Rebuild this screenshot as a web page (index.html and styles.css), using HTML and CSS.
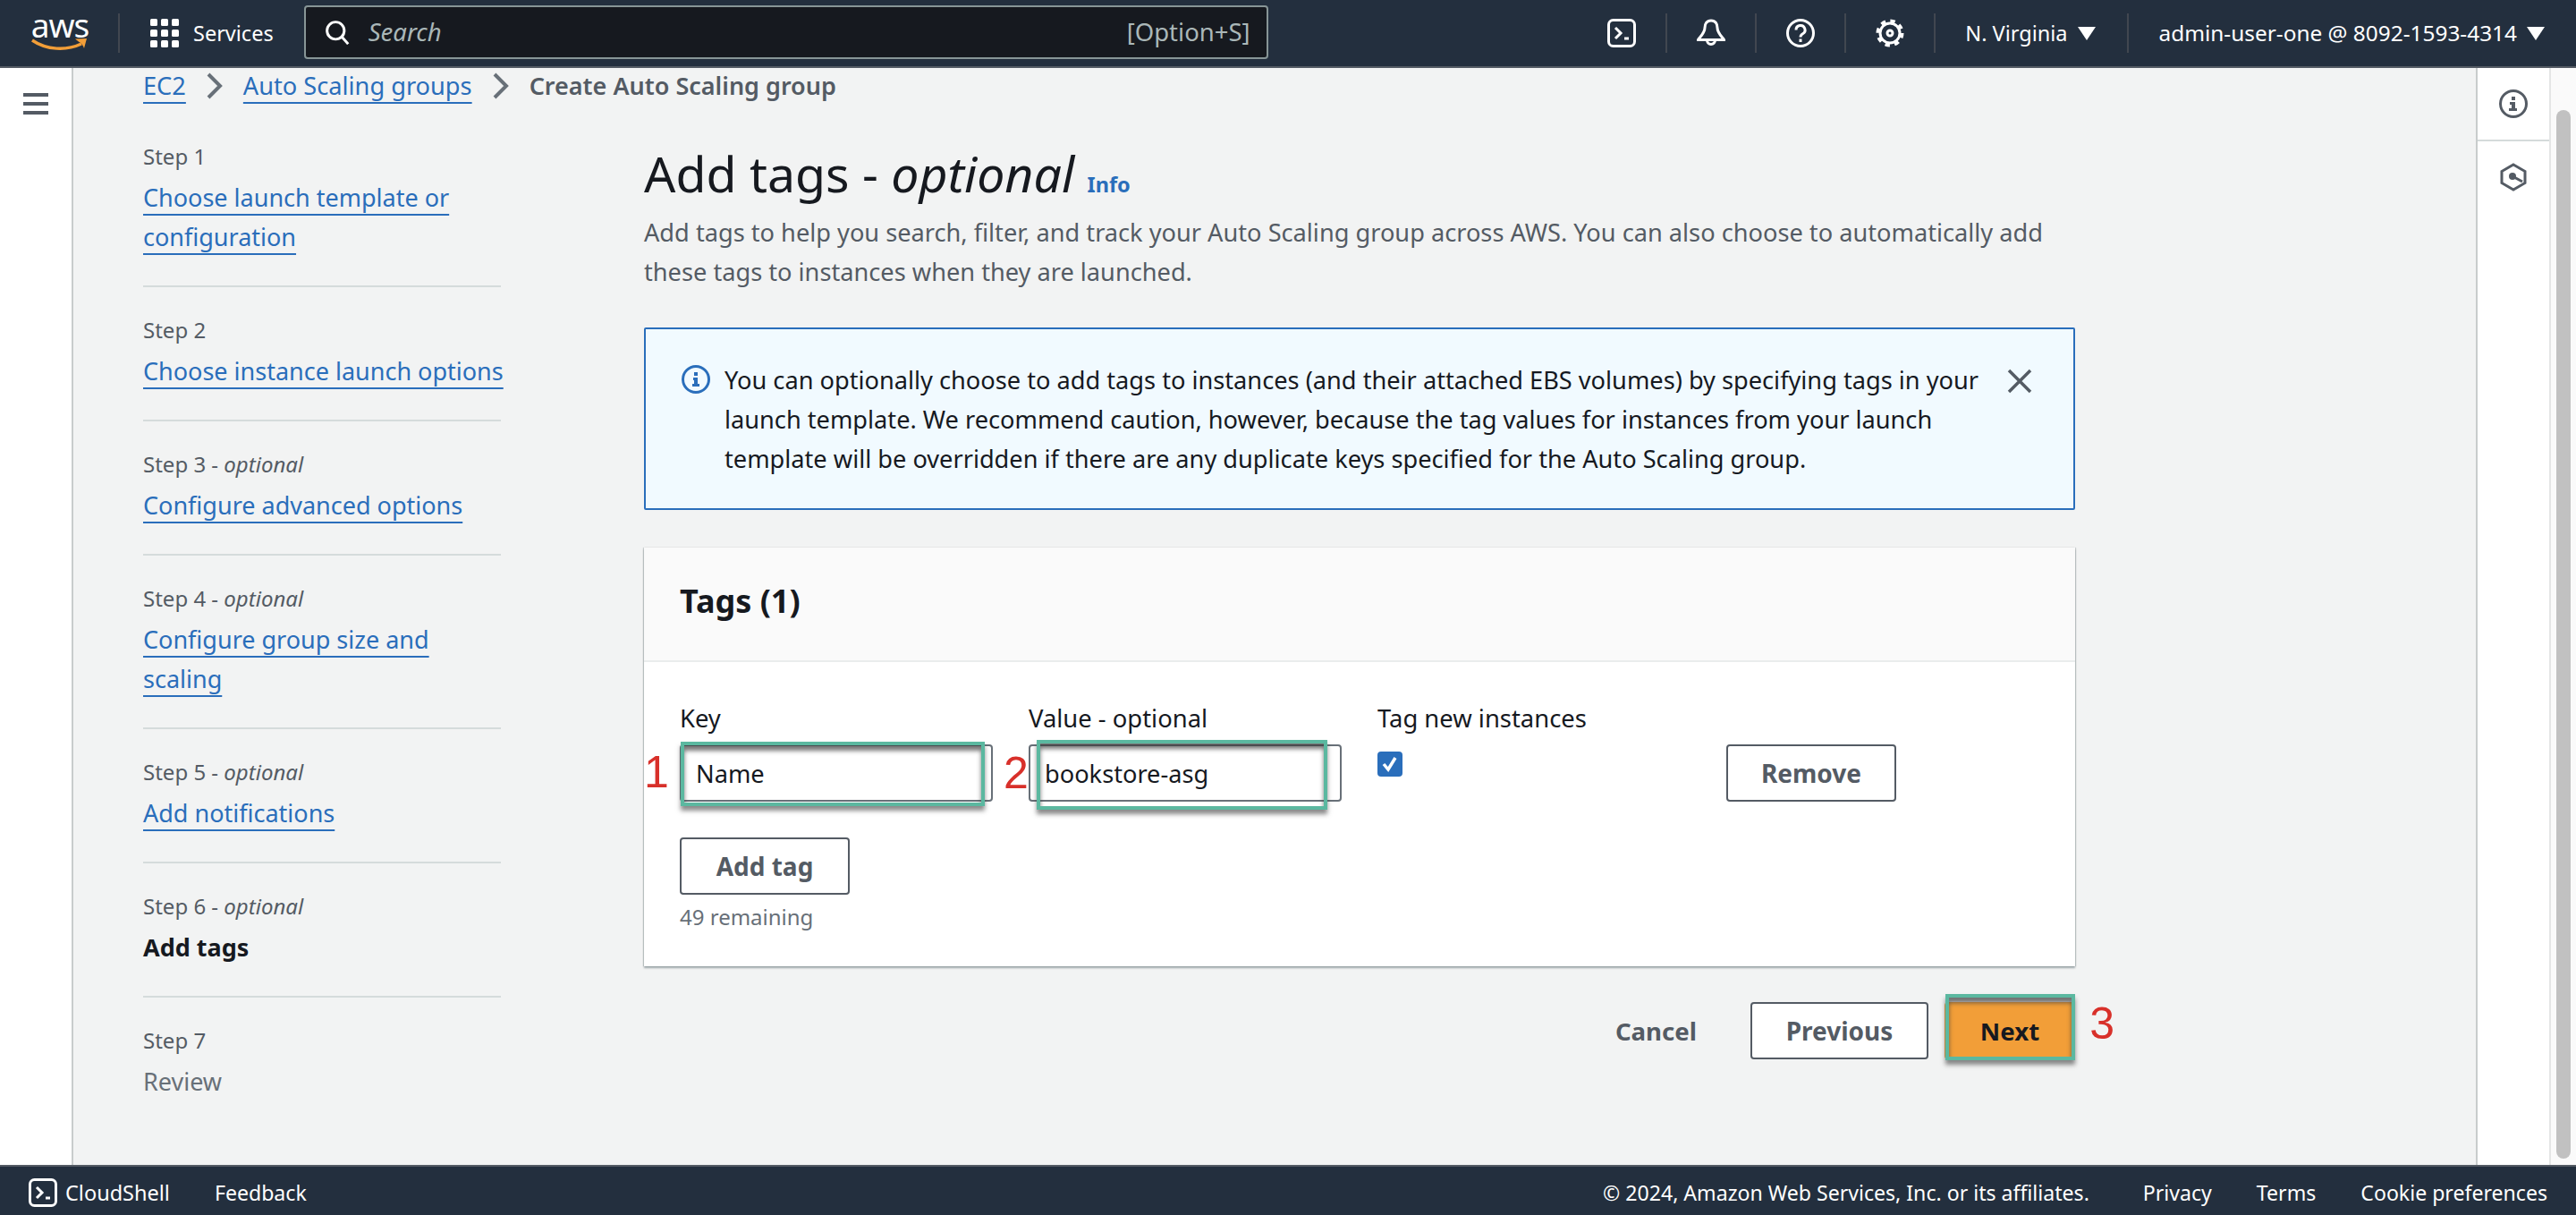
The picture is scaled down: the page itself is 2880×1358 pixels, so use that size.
FILE: index.html
```html
<!DOCTYPE html>
<html lang="en">
<head>
    <meta charset="UTF-8">
    <title>Create Auto Scaling group</title>
    <link rel="stylesheet" href="styles.css">
</head>
<body>
    <header class="topbar">
        <div class="logo">
            <span class="logo-word">aws</span>
            <svg class="logo-smile" width="64" height="16" viewBox="0 0 64 16"><path d="M1 3c16 11 38 12 55 4" fill="none" stroke="#f29e38" stroke-width="3.4"/><path d="M49 1.5l13-.5-3 11c-1-3-3-6-5.5-7z" fill="#f29e38"/></svg>
        </div>
        <span class="sep sep-logo"></span>
        <svg class="grid-icon" width="32" height="32" viewBox="0 0 32 32" fill="#fff">
            <rect width="8" height="8" rx="1.5"/><rect x="12" width="8" height="8" rx="1.5"/><rect x="24" width="8" height="8" rx="1.5"/>
            <rect y="12" width="8" height="8" rx="1.5"/><rect x="12" y="12" width="8" height="8" rx="1.5"/><rect x="24" y="12" width="8" height="8" rx="1.5"/>
            <rect y="24" width="8" height="8" rx="1.5"/><rect x="12" y="24" width="8" height="8" rx="1.5"/><rect x="24" y="24" width="8" height="8" rx="1.5"/>
        </svg>
        <span class="services">Services</span>
        <div class="search">
            <svg width="28" height="28" viewBox="0 0 16 16" fill="none" stroke="#fff" stroke-width="1.7"><circle cx="7" cy="7" r="5.5"/><path d="M11 11l4 4.5"/></svg>
            <span class="search-text">Search</span>
            <span class="search-key">[Option+S]</span>
        </div>
        <div class="top-icons">
            <svg class="top-icon" width="32" height="32" viewBox="0 0 32 32" fill="none" stroke="#fff" stroke-width="3"><rect x="1.5" y="1.5" width="29" height="29" rx="5"/><path d="M9 10l6 6-6 6M19 22h5"/></svg>
            <span class="sep"></span>
            <svg class="top-icon" width="32" height="32" viewBox="0 0 32 32" fill="none" stroke="#fff" stroke-width="3"><path d="M16 2c-5 0-7 4-7 8 0 6-6 11-7.5 13.5h29C29 21 23 16 23 10c0-4-2-8-7-8zM11.5 24a4.5 4.5 0 0 0 9 0"/></svg>
            <span class="sep"></span>
            <svg class="top-icon" width="32" height="32" viewBox="0 0 32 32" fill="none" stroke="#fff" stroke-width="3"><circle cx="16" cy="16" r="14.5"/><path d="M11 12.5a5 5 0 1 1 7.5 4.3c-1.7 1-2.5 1.7-2.5 3.7"/><path d="M16 22.500v3.500"/></svg>
            <span class="sep"></span>
            <svg class="top-icon" width="32" height="32" viewBox="0 0 32 32" fill="none" stroke="#fff"><circle cx="16" cy="16" r="11" stroke-width="3"/><circle cx="16" cy="16" r="13.5" stroke-width="4" stroke-dasharray="5.3 5.3"/><circle cx="16" cy="16" r="3" stroke-width="3"/></svg>
            <span class="sep"></span>
        </div>
        <span class="top-menu region">N. Virginia<i class="caret"></i></span>
        <span class="sep"></span>
        <span class="top-menu account">admin-user-one @ 8092-1593-4314<i class="caret"></i></span>
    </header>

    <div class="middle">
        <nav class="side-nav">
            <div class="burger"><span></span><span></span><span></span></div>
        </nav>

        <div class="content">
            <div class="breadcrumbs">
                <a class="link">EC2</a>
                <svg class="crumb-sep" width="18" height="30" viewBox="0 0 18 30"><path d="M2 2l13 13L2 28" fill="none" stroke="#687078" stroke-width="4"/></svg>
                <a class="link">Auto Scaling groups</a>
                <svg class="crumb-sep" width="18" height="30" viewBox="0 0 18 30"><path d="M2 2l13 13L2 28" fill="none" stroke="#687078" stroke-width="4"/></svg>
                <span class="crumb-current">Create Auto Scaling group</span>
            </div>

            <div class="columns">
                <ol class="steps">
                    <li class="step">
                        <div class="step-label">Step 1</div>
                        <a class="link">Choose launch template or<br>configuration</a>
                    </li>
                    <li class="step">
                        <div class="step-label">Step 2</div>
                        <a class="link">Choose instance launch options</a>
                    </li>
                    <li class="step">
                        <div class="step-label">Step 3 - <em>optional</em></div>
                        <a class="link">Configure advanced options</a>
                    </li>
                    <li class="step">
                        <div class="step-label">Step 4 - <em>optional</em></div>
                        <a class="link">Configure group size and<br>scaling</a>
                    </li>
                    <li class="step">
                        <div class="step-label">Step 5 - <em>optional</em></div>
                        <a class="link">Add notifications</a>
                    </li>
                    <li class="step">
                        <div class="step-label">Step 6 - <em>optional</em></div>
                        <strong class="step-current">Add tags</strong>
                    </li>
                    <li class="step">
                        <div class="step-label">Step 7</div>
                        <span class="step-off">Review</span>
                    </li>
                </ol>

                <main class="main">
                    <h1 class="title">Add tags - <em>optional</em> <a class="info-link">Info</a></h1>
                    <p class="desc">Add tags to help you search, filter, and track your Auto Scaling group across AWS. You can also choose to automatically add<br>these tags to instances when they are launched.</p>

                    <div class="alert">
                        <svg class="alert-icon" width="32" height="32" viewBox="0 0 32 32"><circle cx="16" cy="16" r="14.5" fill="none" stroke="#2a6ebb" stroke-width="3"/><path d="M14 8h4v4h-4zM13 14h5v7h2v3h-8v-3h2v-4h-1z" fill="#2a6ebb"/></svg>
                        <p class="alert-text">You can optionally choose to add tags to instances (and their attached EBS volumes) by specifying tags in your<br>launch template. We recommend caution, however, because the tag values for instances from your launch<br>template will be overridden if there are any duplicate keys specified for the Auto Scaling group.</p>
                        <svg class="alert-close" width="28" height="28" viewBox="0 0 28 28"><path d="M2 2l24 24M26 2L2 26" fill="none" stroke="#545b64" stroke-width="3.5"/></svg>
                    </div>

                    <section class="panel">
                        <h2 class="panel-head">Tags (1)</h2>
                        <div class="panel-body">
                            <div class="tag-row">
                                <div class="field">
                                    <label class="field-label">Key</label>
                                    <div class="input-wrap">
                                        <input class="input" type="text" value="Name">
                                        <span class="mark mark-key"></span>
                                        <span class="num num-1">1</span>
                                    </div>
                                </div>
                                <div class="field">
                                    <label class="field-label">Value - optional</label>
                                    <div class="input-wrap">
                                        <input class="input" type="text" value="bookstore-asg">
                                        <span class="mark mark-value"></span>
                                        <span class="num num-2">2</span>
                                    </div>
                                </div>
                                <div class="field">
                                    <label class="field-label">Tag new instances</label>
                                    <span class="checkbox"><svg width="20" height="20" viewBox="0 0 20 20"><path d="M3 10l5 6 8-13" fill="none" stroke="#fff" stroke-width="3.5"/></svg></span>
                                </div>
                                <button class="btn btn-remove">Remove</button>
                            </div>
                            <button class="btn btn-add">Add tag</button>
                            <div class="hint">49 remaining</div>
                        </div>
                    </section>

                    <div class="actions">
                        <button class="btn-plain">Cancel</button>
                        <button class="btn btn-prev">Previous</button>
                        <div class="next-wrap">
                            <button class="btn-next">Next</button>
                            <span class="mark mark-next"></span>
                            <span class="num num-3">3</span>
                        </div>
                    </div>
                </main>
            </div>
        </div>

        <aside class="side-tools">
            <div class="tool tool-first">
                <svg width="32" height="32" viewBox="0 0 32 32"><circle cx="16" cy="16" r="14.5" fill="none" stroke="#545b64" stroke-width="3"/><path d="M14 8h4v4h-4zM12 14h6v7h2v3h-9v-3h3v-4h-2z" fill="#545b64"/></svg>
            </div>
            <div class="tool">
                <svg width="30" height="32" viewBox="0 0 30 32"><path d="M15 2l13 7.5v13L15 30 2 22.5v-13z" fill="none" stroke="#545b64" stroke-width="3"/><circle cx="14" cy="15" r="4" fill="#545b64"/><path d="M14 15l11 6" stroke="#545b64" stroke-width="3"/></svg>
            </div>
        </aside>
        <div class="scrollbar"><span class="thumb"></span></div>
    </div>

    <footer class="bottombar">
        <svg width="32" height="32" viewBox="0 0 32 32" fill="none" stroke="#fff" stroke-width="3"><rect x="1.5" y="1.5" width="29" height="29" rx="5"/><path d="M9 10l6 6-6 6M19 22h5"/></svg>
        <span class="bottom-item shell-item">CloudShell</span>
        <span class="bottom-item">Feedback</span>
        <span class="bottom-item copyright">© 2024, Amazon Web Services, Inc. or its affiliates.</span>
        <span class="bottom-item">Privacy</span>
        <span class="bottom-item">Terms</span>
        <span class="bottom-item">Cookie preferences</span>
    </footer>
</body>
</html>
```

FILE: styles.css
```css
* {
    box-sizing: border-box;
}

body {
    margin: 0;
    height: 100vh;
    display: flex;
    flex-direction: column;
    overflow: hidden;
    font-family: "Noto Sans", Arial, sans-serif;
    font-size: 27.2px;
    line-height: 44px;
    color: #16191f;
    background: #f2f3f3;
}

/* top bar */
.topbar {
    height: 76px;
    flex: none;
    display: flex;
    align-items: center;
    background: #232f3e;
    border-bottom: 2px solid #545b64;
    color: #fff;
    padding: 0 35px 0 36px;
}

.logo {
    width: 62px;
    height: 44px;
    display: flex;
    flex-direction: column;
    align-items: center;
}

.logo-word {
    font-size: 37px;
    line-height: 26px;
    height: 27px;
    letter-spacing: -1px;
}

.logo-smile {
    display: block;
}

.sep {
    width: 2px;
    height: 44px;
    background: #414750;
    flex: none;
}

.sep-logo {
    margin-left: 34px;
    margin-right: 34px;
}

.services {
    margin-left: 16px;
    font-size: 23.5px;
    margin-right: 34px;
}

.search {
    width: 1078px;
    height: 60px;
    margin-top: -2px;
    display: flex;
    align-items: center;
    background: #16191f;
    border: 2px solid #879596;
    border-radius: 4px;
    padding: 0 18px 0 21px;
    color: #aab7b8;
    font-size: 27.5px;
}

.search-text {
    margin-left: 21px;
    font-style: italic;
}

.search-key {
    margin-left: auto;
}

.top-icons {
    display: flex;
    align-items: center;
    margin-left: auto;
}

.top-icon {
    flex: none;
}

.top-icons .sep {
    margin: 0 33px;
}

.top-menu {
    font-size: 24.4px;
    display: flex;
    align-items: center;
    white-space: pre;
}

.region {
    font-size: 23.5px;
    margin-right: 35px;
}

.account {
    margin-left: 34px;
}

.caret {
    display: inline-block;
    margin-left: 11px;
    border-left: 10px solid transparent;
    border-right: 10px solid transparent;
    border-top: 15px solid #fff;
}

/* middle area */
.middle {
    flex: 1;
    min-height: 0;
    display: flex;
}

.side-nav {
    width: 82px;
    flex: none;
    background: #fff;
    border-right: 2px solid #c8cccc;
    padding: 28px 0 0 26px;
}

.burger span {
    display: block;
    width: 28px;
    height: 4px;
    background: #545b64;
    margin-bottom: 6px;
}

.content {
    flex: 1;
    min-width: 0;
    padding-left: 78px;
}

.breadcrumbs {
    height: 44px;
    margin-top: -2px;
    display: flex;
    align-items: center;
    gap: 23px;
}

.crumb-sep {
    flex: none;
}

.crumb-current {
    font-weight: 600;
    color: #545b64;
    font-size: 27px;
}

.link {
    color: #2a6ebb;
    text-decoration: underline;
    text-decoration-thickness: 2px;
    text-underline-offset: 8px;
}

.columns {
    display: grid;
    grid-template-columns: 400px 1600px;
    column-gap: 160px;
    margin-top: 41px;
}

/* wizard steps */
.steps {
    list-style: none;
    margin: 0;
    padding: 0;
}

.step {
    padding-bottom: 32px;
    margin-bottom: 32px;
    border-bottom: 2px solid #d5dbdb;
    font-size: 27px;
    white-space: nowrap;
}

.step:last-child {
    border-bottom: 0;
}

.step-label {
    font-size: 24px;
    line-height: 32px;
    margin-bottom: 7px;
    padding-bottom: 1px;
    color: #545b64;
}

.step-current {
    font-weight: 700;
}

.step-off {
    color: #687078;
}

/* main column */
.title {
    margin: -1px 0 0;
    font-size: 55.4px;
    line-height: 72px;
    font-weight: 400;
}

.info-link {
    font-size: 23.5px;
    line-height: 1;
    font-weight: 700;
    color: #2a6ebb;
}

.desc {
    margin: 8px 0 40px;
    color: #545b64;
}

.alert {
    height: 204px;
    display: flex;
    background: #f1faff;
    border: 2px solid #2a6ebb;
    border-radius: 2px;
    padding: 35px 0 0 40px;
}

.alert-icon {
    flex: none;
    margin: 5px 16px 0 0;
}

.alert-text {
    margin: 0;
    flex: 1;
}

.alert-close {
    flex: none;
    margin: 9px 46px 0 0;
}

.panel {
    margin-top: 42px;
    background: #fff;
    box-shadow: 0 2px 2px rgba(0, 28, 36, 0.35), 1px 0 1px rgba(0, 28, 36, 0.15), -1px 0 1px rgba(0, 28, 36, 0.15);
}

.panel-head {
    margin: 0;
    height: 128px;
    padding: 38px 40px 0;
    font-size: 36px;
    line-height: 44px;
    font-weight: 700;
    background: #fafafa;
    border-bottom: 2px solid #eaeded;
}

.panel-body {
    padding: 41px 40px 39px;
}

.tag-row {
    display: grid;
    grid-template-columns: 350px 350px 350px 190px;
    column-gap: 40px;
    align-items: start;
}

.field-label {
    display: block;
    margin-bottom: 7px;
    font-size: 27.4px;
}

.input-wrap {
    position: relative;
}

.input {
    display: block;
    width: 100%;
    height: 64px;
    padding: 0 16px;
    border: 2px solid #687078;
    border-radius: 4px;
    background: #fff;
    color: #16191f;
    font: inherit;
}

.checkbox {
    display: flex;
    width: 28px;
    height: 28px;
    margin-top: 15px;
    border-radius: 4px;
    background: #2a6ebb;
    align-items: center;
    justify-content: center;
}

.btn {
    height: 64px;
    padding: 0;
    border: 2px solid #545b64;
    border-radius: 4px;
    background: #fff;
    color: #545b64;
    font: inherit;
    font-size: 28px;
    font-weight: 700;
}

.btn-remove {
    margin-top: 51px;
}

.btn-add {
    display: block;
    width: 190px;
    margin-top: 40px;
}

.hint {
    margin-top: 9px;
    font-size: 24px;
    line-height: 32px;
    color: #687078;
}

.actions {
    margin-top: 40px;
    display: flex;
    justify-content: flex-end;
    align-items: center;
}

.btn-plain {
    border: 0;
    background: none;
    color: #545b64;
    font: inherit;
    font-size: 27.6px;
    font-weight: 700;
    padding: 0;
    margin-right: 60px;
}

.btn-prev {
    width: 199px;
    margin-right: 18px;
}

.next-wrap {
    position: relative;
}

.btn-next {
    display: block;
    width: 146px;
    height: 64px;
    border: 0;
    border-radius: 4px;
    background: #f29e38;
    color: #16191f;
    font: inherit;
    font-size: 27.6px;
    font-weight: 700;
}

/* tutorial marks drawn over the screenshot */
.mark {
    position: absolute;
    border: 4px solid #5bb8a0;
    box-shadow: 0 5px 5px rgba(60, 60, 60, 0.6), inset 0 6px 5px rgba(60, 60, 60, 0.7);
}

.mark-key {
    left: 1px;
    top: -3px;
    width: 340px;
    height: 72px;
}

.mark-value {
    left: 9px;
    top: -5px;
    width: 325px;
    height: 78px;
}

.mark-next {
    left: 1px;
    top: -9px;
    width: 145px;
    height: 74px;
}

.num {
    position: absolute;
    font-family: "Liberation Sans", Arial, sans-serif;
    font-size: 50px;
    line-height: 50px;
    color: #d8302a;
}

.num-1 {
    left: -40px;
    top: 6px;
}

.num-2 {
    left: -28px;
    top: 7px;
}

.num-3 {
    right: -44px;
    top: -1px;
}

/* right tools */
.side-tools {
    width: 84px;
    flex: none;
    background: #fff;
    border-left: 2px solid #c8cccc;
    border-right: 2px solid #e4e6e6;
}

.tool {
    height: 80px;
    display: flex;
    justify-content: center;
    padding-top: 24px;
}

.tool-first {
    border-bottom: 2px solid #d5dbdb;
    height: 82px;
    padding-top: 24px;
}

.scrollbar {
    width: 28px;
    flex: none;
    background: #fafafa;
    padding: 47px 6px 7px;
}

.thumb {
    display: block;
    height: 100%;
    border-radius: 8px;
    background: #c1c1c1;
}

/* bottom bar */
.bottombar {
    height: 56px;
    flex: none;
    display: flex;
    align-items: center;
    background: #232f3e;
    border-top: 2px solid #545b64;
    color: #fff;
    font-size: 23.1px;
    padding: 4px 32px 0;
    gap: 50px;
}

.shell-item {
    margin-left: -41px;
    font-size: 23.5px;
}

.copyright {
    margin-left: auto;
    margin-right: 10px;
}
```
